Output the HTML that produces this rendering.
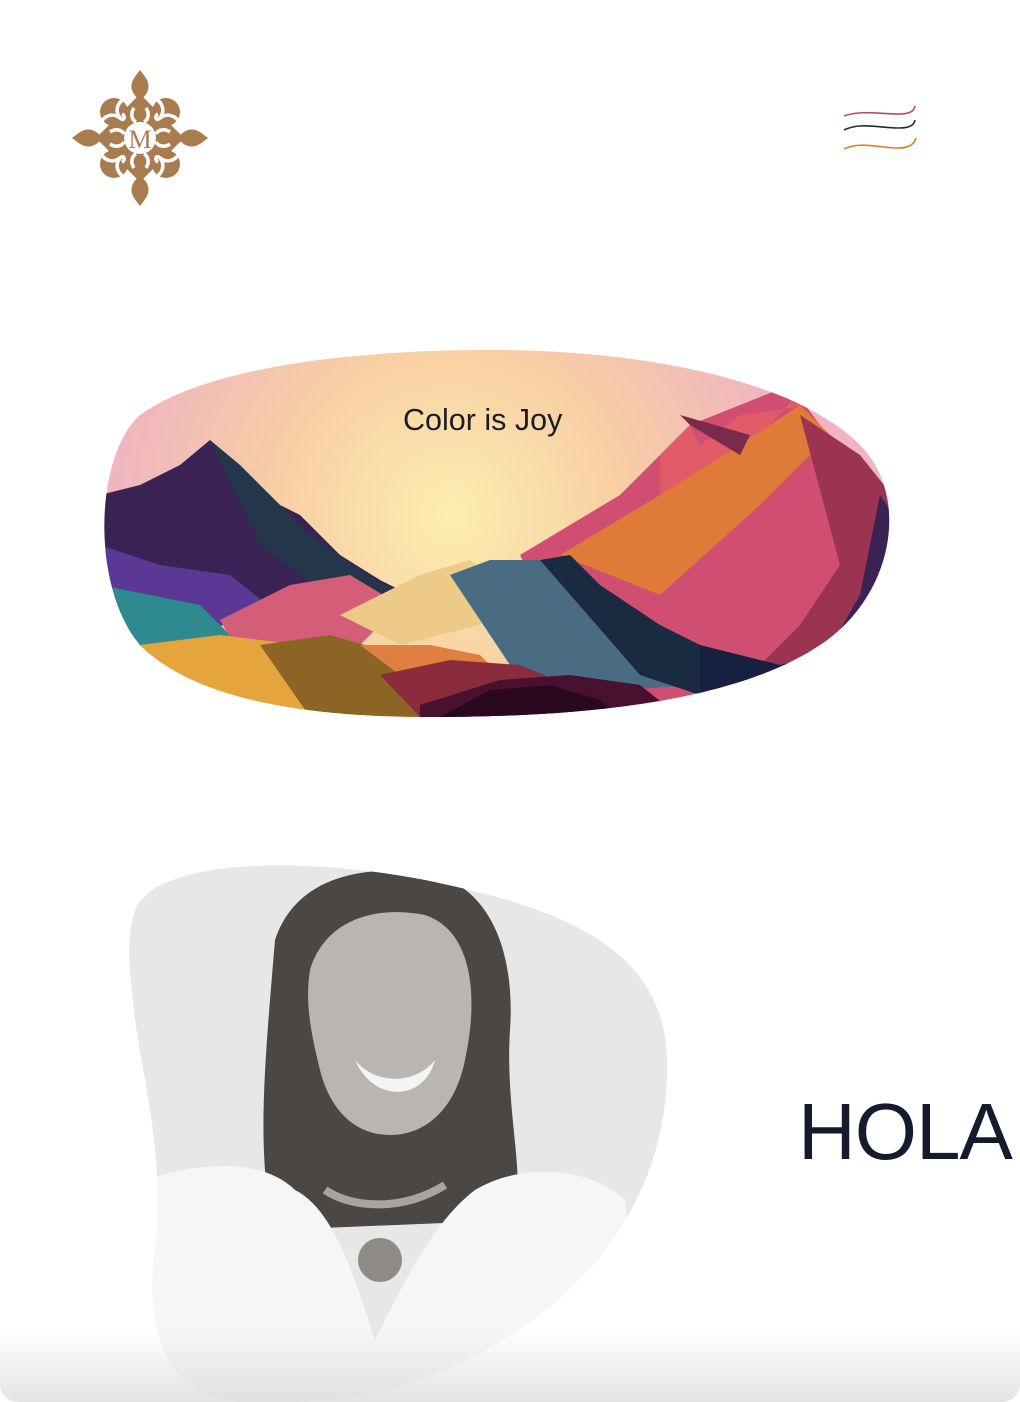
<!DOCTYPE html>
<html><head><meta charset="utf-8"><style>
html,body{margin:0;padding:0;background:#fff;}
body{width:1020px;height:1402px;position:relative;overflow:hidden;font-family:"Liberation Sans",sans-serif;}
.abs{position:absolute;}
</style></head><body>
<!-- logo -->
<svg class="abs" style="left:70px;top:68px" width="140" height="140" viewBox="0 0 140 140">
<g fill="#a97c50">
<path d="M70 2 C64 10 60 14 62 22 C64 28 68 30 70 34 C72 30 76 28 78 22 C80 14 76 10 70 2Z"/>
<path d="M70 138 C64 130 60 126 62 118 C64 112 68 110 70 106 C72 110 76 112 78 118 C80 126 76 130 70 138Z"/>
<path d="M2 70 C10 64 14 60 22 62 C28 64 30 68 34 70 C30 72 28 76 22 78 C14 80 10 76 2 70Z"/>
<path d="M138 70 C130 64 126 60 118 62 C112 64 110 68 106 70 C110 72 112 76 118 78 C126 80 130 76 138 70Z"/>
<path d="M70 26 L114 70 L70 114 L26 70Z"/>
<circle cx="44" cy="44" r="14"/><circle cx="96" cy="44" r="14"/><circle cx="44" cy="96" r="14"/><circle cx="96" cy="96" r="14"/>
</g>
<g fill="none" stroke="#fff" stroke-width="3.5">
<path d="M58 30 C48 32 44 42 50 50 C54 54 56 48 52 46"/>
<path d="M82 30 C92 32 96 42 90 50 C86 54 84 48 88 46"/>
<path d="M58 110 C48 108 44 98 50 90 C54 86 56 92 52 94"/>
<path d="M82 110 C92 108 96 98 90 90 C86 86 84 92 88 94"/>
<path d="M30 58 C32 48 42 44 50 50"/>
<path d="M110 58 C108 48 98 44 90 50"/>
<path d="M30 82 C32 92 42 96 50 90"/>
<path d="M110 82 C108 92 98 96 90 90"/>
<path d="M64 40 C60 46 62 52 66 54"/><path d="M76 40 C80 46 78 52 74 54"/>
<path d="M64 100 C60 94 62 88 66 86"/><path d="M76 100 C80 94 78 88 74 86"/>
<path d="M40 64 C46 60 52 62 54 66"/><path d="M40 76 C46 80 52 78 54 74"/>
<path d="M100 64 C94 60 88 62 86 66"/><path d="M100 76 C94 80 88 78 86 74"/>
</g>
<circle cx="70" cy="70" r="16" fill="#fff"/>
<text x="70" y="80" text-anchor="middle" font-family="Liberation Serif,serif" font-size="26" fill="#a97c50">M</text>
</svg>
<!-- menu -->
<svg class="abs" style="left:840px;top:102px" width="82" height="52" viewBox="0 0 82 52">
<path d="M4 14 C20 8 40 12 58 12 C66 12 74 11 75 4" stroke="#b24a6c" stroke-width="1.6" fill="none"/>
<path d="M4 28 C20 20 40 26 58 26 C66 26 74 25 75 18" stroke="#1e2a40" stroke-width="1.6" fill="none"/>
<path d="M4 47 C20 39 40 46 58 46 C66 46 74 44 76 36" stroke="#d9822b" stroke-width="1.6" fill="none"/>
</svg>
<!-- mountains -->
<svg class="abs" style="left:100px;top:345px" width="800" height="380" viewBox="0 0 800 380">
<defs>
<clipPath id="c"><path d="M40 70 C110 20 260 5 390 5 C560 5 700 40 760 100 C810 150 795 250 720 300 C630 360 470 372 330 372 C190 372 90 350 40 300 C-10 240 -5 110 40 70Z"/></clipPath>
<radialGradient id="s" cx="350" cy="170" r="340" gradientUnits="userSpaceOnUse"><stop offset="0" stop-color="#fdeeae"/><stop offset="0.5" stop-color="#f7cfa4"/><stop offset="1" stop-color="#f0b5c0"/></radialGradient>
</defs>
<g clip-path="url(#c)">
<rect width="800" height="380" fill="url(#s)"/>
<path d="M0 150 L40 140 L80 120 L110 95 L125 110 L160 150 L200 170 L240 210 L280 235 L310 250 L0 300Z" fill="#3a2254"/>
<path d="M110 95 L140 120 L170 150 L210 190 L260 225 L300 250 L240 260 L160 200Z" fill="#24364a"/>
<path d="M0 200 L60 220 L130 230 L180 270 L0 300Z" fill="#5a3894"/>
<path d="M0 240 L100 260 L140 300 L0 330Z" fill="#2f8a8f"/>
<path d="M120 275 L190 240 L250 230 L300 260 L260 300 L140 310Z" fill="#d45e78"/>
<path d="M420 210 L470 180 L520 150 L560 110 L590 80 L640 60 L690 40 L720 80 L760 120 L800 170 L800 380 L500 380Z" fill="#d04e72"/>
<path d="M560 110 L590 80 L600 100 L640 70 L700 62 L706 40 L560 200Z" fill="#e05a68"/>
<path d="M460 210 L560 150 L640 100 L700 60 L730 90 L660 160 L560 250Z" fill="#e07a38"/>
<path d="M580 70 L590 80 L640 110 L650 90Z" fill="#7a2a4a"/>
<path d="M700 70 L760 110 L800 160 L800 380 L600 380 L700 280 L740 220Z" fill="#9a3450"/>
<path d="M780 150 L800 180 L800 300 L720 320 L760 250Z" fill="#3a2254"/>
<path d="M240 270 L320 230 L370 215 L400 240 L380 280 L300 300Z" fill="#eccb88"/>
<path d="M350 230 L390 215 L440 215 L470 230 L520 270 L560 320 L600 340 L430 350Z" fill="#4a6c82"/>
<path d="M440 215 L470 210 L500 240 L560 280 L640 320 L600 350 L540 330Z" fill="#1a2a40"/>
<path d="M600 300 L680 320 L760 300 L760 380 L600 380Z" fill="#162040"/>
<path d="M40 300 L120 290 L200 300 L280 320 L330 372 L60 372Z" fill="#e4a63c"/>
<path d="M160 300 L230 290 L300 310 L340 372 L210 372Z" fill="#8b6426"/>
<path d="M260 300 L330 300 L380 310 L420 350 L340 360Z" fill="#e08040"/>
<path d="M280 330 L350 315 L420 320 L480 345 L420 372 L320 372Z" fill="#8a2c3c"/>
<path d="M320 360 L400 335 L470 330 L540 340 L580 372 L320 372Z" fill="#4a1030"/>
<path d="M340 372 L390 345 L450 340 L500 355 L520 372Z" fill="#2a0820"/>
</g>
</svg>
<div class="abs" style="left:403px;top:403px;font-size:30.5px;color:#1c1c24;">Color is Joy</div>
<!-- photo -->
<svg class="abs" style="left:125px;top:860px" width="550" height="542" viewBox="0 0 550 542">
<defs><clipPath id="p"><path d="M10 50 C30 0 170 -5 300 20 C420 45 540 80 542 200 C545 330 470 430 360 490 C290 530 220 545 120 542 C40 540 20 470 30 390 C40 300 20 230 10 160 C5 110 0 80 10 50Z"/></clipPath></defs>
<g clip-path="url(#p)">
<rect width="550" height="542" fill="#e7e7e7"/>
<path d="M150 80 C170 20 230 5 300 12 C370 25 390 100 385 170 C380 250 400 310 390 360 L150 370 C130 300 140 200 150 80Z" fill="#4a4745"/>
<path d="M185 110 C200 60 250 45 300 55 C345 70 355 130 340 200 C330 250 300 275 265 275 C230 275 205 250 195 210 C185 170 180 140 185 110Z" fill="#b9b5b1"/>
<path d="M230 200 C250 225 290 225 310 200 C300 240 250 245 230 200Z" fill="#f4f4f4"/>
<path d="M20 320 C80 300 140 300 170 330 C210 350 230 420 250 480 C280 420 310 360 350 330 C400 300 470 310 500 340 L520 542 L20 542Z" fill="#f6f6f6"/>
<circle cx="255" cy="400" r="22" fill="#8e8a86"/>
<path d="M200 330 C230 350 280 350 320 325" stroke="#a8a4a0" stroke-width="8" fill="none"/>
</g>
</svg>
<div class="abs" style="left:798px;top:1086px;font-size:80px;color:#141b2d;letter-spacing:-1px;">HOLA</div>
<div class="abs" style="left:0;top:1330px;width:1020px;height:72px;background:linear-gradient(rgba(230,230,230,0),rgba(210,210,210,0.6));border-radius:0 0 18px 18px;"></div>
</body></html>
